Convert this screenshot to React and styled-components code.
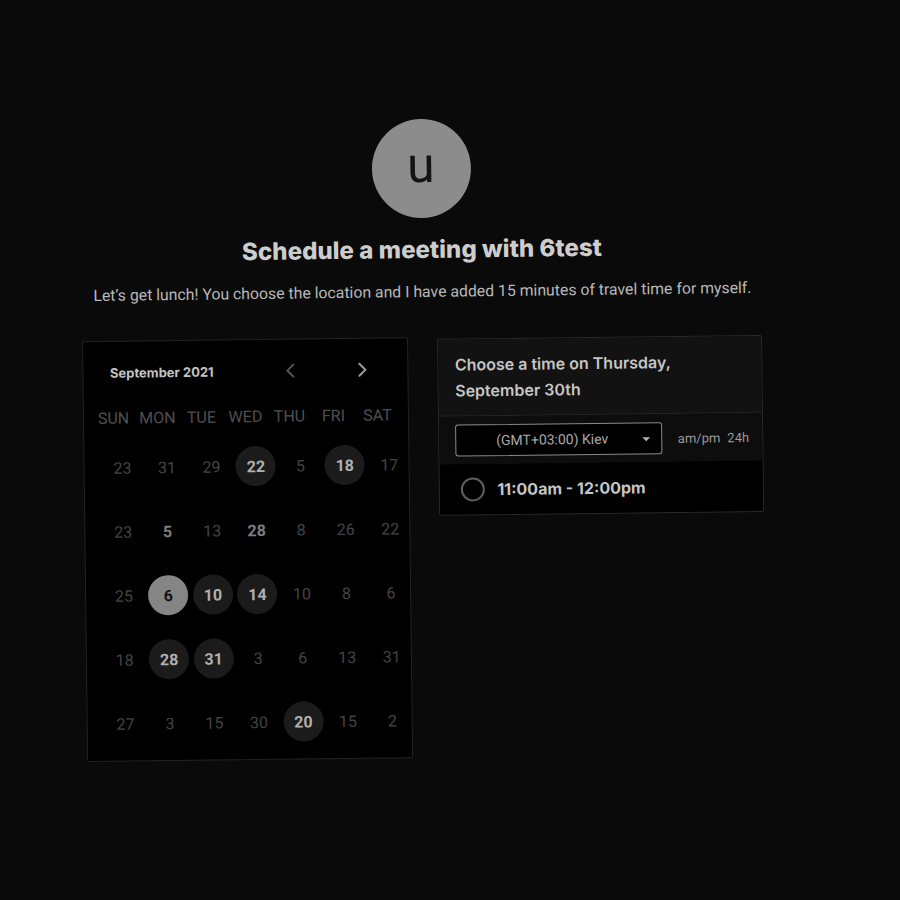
import React from "react";
import styled, { createGlobalStyle } from "styled-components";

const Global = createGlobalStyle`
  html, body { margin: 0; padding: 0; background: #0a0a0a; }
  body { font-family: Roboto, "Liberation Sans", sans-serif; }
  * { box-sizing: border-box; }
`;

const Page = styled.div`
  width: 900px;
  height: 900px;
  background: #0a0a0a;
  padding-top: 119px;
  overflow: hidden;
`;

const Content = styled.div`
  width: 700px;
  margin-left: 74px;
  display: flex;
  flex-direction: column;
  align-items: center;
  transform: rotate(-0.7deg);
  transform-origin: 350px 300px;
`;

const Avatar = styled.div`
  width: 99px;
  height: 99px;
  border-radius: 50%;
  background: #8c8c8c;
  color: #141414;
  display: flex;
  align-items: center;
  justify-content: center;
  font-family: Roboto, "Liberation Sans", sans-serif;
  font-size: 50px;
  line-height: 1;
  padding-bottom: 8px;
`;

const Title = styled.h1`
  margin: 16px 0 0;
  font-family: Inter, "Liberation Sans", sans-serif;
  font-weight: 800;
  font-size: 24.1px;
  line-height: 32px;
  color: #cdcdcd;
`;

const Subtitle = styled.p`
  margin: 14px 0 0;
  font-family: Roboto, "Liberation Sans", sans-serif;
  font-size: 15.8px;
  line-height: 24px;
  color: #b8b8b8;
  white-space: nowrap;
`;

const Cards = styled.div`
  margin-top: 33px;
  display: flex;
  gap: 29px;
  align-items: flex-start;
  width: 682px;
  margin-left: -1px;
`;

const CalendarCard = styled.div`
  width: 326px;
  background: #000;
  border: 1px solid #232323;
  border-radius: 2px;
  padding: 18px 0 5px;
`;

const MonthRow = styled.div`
  height: 26px;
  display: flex;
  align-items: center;
  padding-left: 27px;
`;

const MonthLabel = styled.div`
  font-family: Inter, "Liberation Sans", sans-serif;
  font-weight: 700;
  font-size: 13px;
  color: #c4c4c4;
  width: 170px;
`;

const NavButton = styled.div`
  width: 20px;
  height: 20px;
  display: flex;
  align-items: center;
  justify-content: center;
  margin-left: ${(p) => p.$ml}px;
  color: ${(p) => p.$color};
`;

const WeekHeader = styled.div`
  margin-top: 20px;
  padding-left: 8px;
  display: grid;
  grid-template-columns: repeat(7, 44px);
  height: 24px;
  align-items: center;
`;

const WeekDay = styled.div`
  text-align: center;
  font-size: 16px;
  color: #4f4f4f;
  font-family: Roboto, "Liberation Sans", sans-serif;
`;

const DateGrid = styled.div`
  margin-top: 6px;
  padding-left: 16px;
  display: grid;
  grid-template-columns: repeat(7, 44.5px);
  grid-auto-rows: 64px;
  align-items: center;
  justify-items: center;
`;

const DateCell = styled.div`
  width: 40px;
  height: 40px;
  border-radius: 50%;
  display: flex;
  align-items: center;
  justify-content: center;
  font-family: Roboto, "Liberation Sans", sans-serif;
  font-size: 16px;
  font-weight: ${(p) => (p.$kind === "plain" ? 400 : 700)};
  color: ${(p) =>
    p.$kind === "selected"
      ? "#121212"
      : p.$kind === "circle"
      ? "#b0b0b0"
      : p.$kind === "bold"
      ? "#7e7e7e"
      : "#444"};
  background: ${(p) =>
    p.$kind === "selected"
      ? "#858585"
      : p.$kind === "circle"
      ? "#1b1b1b"
      : "transparent"};
`;

const TimeCard = styled.div`
  width: 325px;
  margin-top: 2px;
  border: 1px solid #2a2a2a;
  border-radius: 2px;
  overflow: hidden;
  background: #000;
`;

const TimeHeader = styled.div`
  background: #121212;
  padding: 12px 17px 12px;
  font-family: Inter, "Liberation Sans", sans-serif;
  font-weight: 600;
  font-size: 16px;
  line-height: 26px;
  color: #c6c6c6;
  border-bottom: 1px solid #262626;
`;

const ZoneRow = styled.div`
  height: 48px;
  background: #0d0d0d;
  display: flex;
  align-items: center;
  padding-left: 16px;
  gap: 16px;
`;

const Select = styled.div`
  width: 207px;
  height: 32px;
  border: 1px solid #8a8a8a;
  border-radius: 3px;
  background: #000;
  position: relative;
  display: flex;
  align-items: center;
  justify-content: center;
  font-family: Roboto, "Liberation Sans", sans-serif;
  font-size: 14px;
  color: #a8a8a8;
  padding-right: 12px;
`;

const Caret = styled.span`
  position: absolute;
  right: 11px;
  top: 14px;
  width: 0;
  height: 0;
  border-left: 4px solid transparent;
  border-right: 4px solid transparent;
  border-top: 4px solid #b0b0b0;
`;

const Toggle = styled.div`
  font-family: Roboto, "Liberation Sans", sans-serif;
  font-size: 13px;
  color: #999;
  display: flex;
  gap: 7px;
`;

const SlotRow = styled.div`
  height: 50px;
  display: flex;
  align-items: center;
  padding-left: 21px;
  gap: 13px;
  background: #000;
`;

const Radio = styled.span`
  width: 24px;
  height: 24px;
  border-radius: 50%;
  border: 2px solid #5e5e5e;
`;

const SlotText = styled.span`
  font-family: Inter, "Liberation Sans", sans-serif;
  font-weight: 700;
  font-size: 16px;
  color: #c6c6c6;
`;

const Chevron = ({ dir }) => (
  <svg width="10" height="16" viewBox="0 0 10 16" fill="none">
    <polyline
      points={dir === "left" ? "8,2 2,8 8,14" : "2,2 8,8 2,14"}
      stroke="currentColor"
      strokeWidth="2"
      strokeLinecap="round"
      strokeLinejoin="round"
    />
  </svg>
);

const weekDays = ["SUN", "MON", "TUE", "WED", "THU", "FRI", "SAT"];

const rows = [
  [["23"], ["31"], ["29"], ["22", "circle"], ["5"], ["18", "circle"], ["17"]],
  [["23"], ["5", "bold"], ["13"], ["28", "bold"], ["8"], ["26"], ["22"]],
  [["25"], ["6", "selected"], ["10", "circle"], ["14", "circle"], ["10"], ["8"], ["6"]],
  [["18"], ["28", "circle"], ["31", "circle"], ["3"], ["6"], ["13"], ["31"]],
  [["27"], ["3"], ["15"], ["30"], ["20", "circle"], ["15"], ["2"]],
];

export default function App() {
  return (
    <>
      <Global />
      <Page>
        <Content>
          <Avatar>u</Avatar>
          <Title>Schedule a meeting with 6test</Title>
          <Subtitle>
            Let’s get lunch! You choose the location and I have added 15 minutes of travel time for myself.
          </Subtitle>
          <Cards>
            <CalendarCard>
              <MonthRow>
                <MonthLabel>September 2021</MonthLabel>
                <NavButton $ml={0} $color="#555">
                  <Chevron dir="left" />
                </NavButton>
                <NavButton $ml={52} $color="#9a9a9a">
                  <Chevron dir="right" />
                </NavButton>
              </MonthRow>
              <WeekHeader>
                {weekDays.map((d) => (
                  <WeekDay key={d}>{d}</WeekDay>
                ))}
              </WeekHeader>
              <DateGrid>
                {rows.flatMap((r, ri) =>
                  r.map(([n, kind], ci) => (
                    <DateCell key={`${ri}-${ci}`} $kind={kind || "plain"}>
                      {n}
                    </DateCell>
                  ))
                )}
              </DateGrid>
            </CalendarCard>
            <TimeCard>
              <TimeHeader>
                Choose a time on Thursday,
                <br />
                September 30th
              </TimeHeader>
              <ZoneRow>
                <Select>
                  (GMT+03:00) Kiev
                  <Caret />
                </Select>
                <Toggle>
                  <span>am/pm</span>
                  <span>24h</span>
                </Toggle>
              </ZoneRow>
              <SlotRow>
                <Radio />
                <SlotText>11:00am - 12:00pm</SlotText>
              </SlotRow>
            </TimeCard>
          </Cards>
        </Content>
      </Page>
    </>
  );
}
